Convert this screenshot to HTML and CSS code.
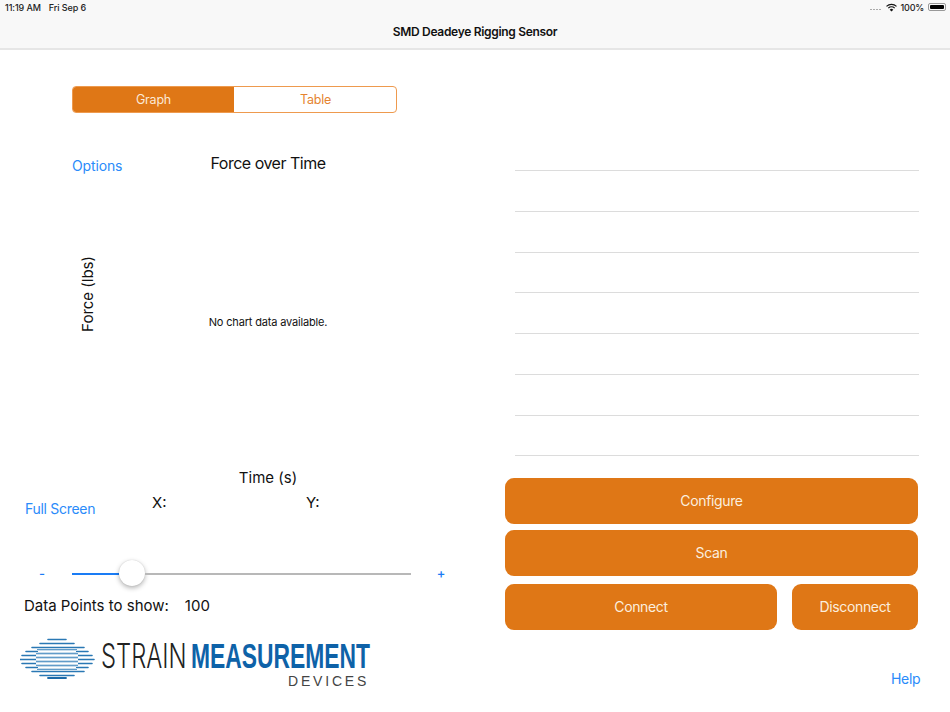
FILE: index.html
```html
<!DOCTYPE html>
<html lang="en">
<head>
<meta charset="utf-8">
<title>SMD Deadeye Rigging Sensor</title>
<link rel="stylesheet" href="styles.css">
</head>
<body>
<div class="app">
  <header class="topbar">
    <div class="status">
      <div class="status-left"><span>11:19 AM</span><span>Fri Sep 6</span></div>
      <div class="status-right">
        <span class="signal"><i></i><i></i><i></i><i></i></span>
        <svg class="wifi" width="11" height="9" viewBox="0 0 11 9"><path d="M5.500 8.600 3.700 6.700a2.600 2.600 0 0 1 3.600 0z" fill="#111"/><path d="M2.700 5.600a4 4 0 0 1 5.600 0l.8-.9a5.200 5.200 0 0 0-7.200 0z" fill="#111"/><path d="M.9 3.800a6.600 6.600 0 0 1 9.200 0l.8-.9a7.800 7.800 0 0 0-10.800 0z" fill="#111"/></svg>
        <span class="pct">100%</span>
        <span class="battery"><span class="battery-fill"></span></span>
      </div>
    </div>
    <h1 class="title">SMD Deadeye Rigging Sensor</h1>
  </header>
  <main class="content">
    <section class="left">
      <div class="segmented">
        <div class="seg seg-on">Graph</div>
        <div class="seg seg-off">Table</div>
      </div>
      <div class="chart">
        <div class="chart-head">
          <a class="link options">Options</a>
          <div class="chart-title">Force over Time</div>
        </div>
        <div class="chart-body">
          <div class="y-label">Force (lbs)</div>
          <div class="no-data">No chart data available.</div>
        </div>
        <div class="x-label">Time (s)</div>
      </div>
      <div class="readout">
        <a class="link full">Full Screen</a>
        <span class="read-x">X:</span>
        <span class="read-y">Y:</span>
      </div>
      <div class="slider-row">
        <span class="step">-</span>
        <div class="slider">
          <div class="track-on"></div>
          <div class="thumb"></div>
          <div class="track-off"></div>
        </div>
        <span class="step">+</span>
      </div>
      <div class="points"><span>Data Points to show:</span><span>100</span></div>
      <svg class="logo" width="352" height="54" viewBox="0 0 352 54">
        <g stroke="#2a78b4" stroke-linecap="round">
          <path stroke-width="1.600" d="M28 2.500H46M20 6.500H54M12 10.500H64M6 14.500H68M2 18.500H72M0 22.500H74M2 26.500H72M6 30.500H68M12 34.500H64M20 38.500H54"/>
        </g>
        <path stroke="#1d6aa8" stroke-width="1.800" stroke-linecap="round" d="M28 41H46"/>
        <g stroke="#fff" stroke-width="1"><path d="M18 14.500H56M16 18.500H58M16 22.500H58M16 26.500H58M18 30.500H56"/></g>
        <g stroke="#3a83bb" stroke-width=".8"><path d="M17 12.500H57M16 16.500H58M16 20.500H58M16 24.500H58M16 28.500H58M17 32.500H57"/></g>
        <text class="logo-strain" transform="translate(81 31) scale(.7 1)">STRAIN</text>
        <text class="logo-meas" transform="translate(171 31) scale(.653 1)">MEASUREMENT</text>
        <text class="logo-dev" x="268" y="49">DEVICES</text>
      </svg>
    </section>
    <section class="right">
      <div class="table">
        <div class="row"></div><div class="row"></div><div class="row"></div><div class="row"></div>
        <div class="row"></div><div class="row"></div><div class="row"></div><div class="row"></div>
      </div>
      <div class="actions">
        <button class="btn btn-wide">Configure</button>
        <button class="btn btn-wide">Scan</button>
        <div class="btn-pair">
          <button class="btn">Connect</button>
          <button class="btn">Disconnect</button>
        </div>
      </div>
      <a class="link help">Help</a>
    </section>
  </main>
</div>
</body>
</html>
```
FILE: styles.css
```css
* { box-sizing: border-box; }
html, body { margin: 0; padding: 0; background: #fff; }
body { font-family: Inter, "Liberation Sans", sans-serif; color: #111; }
.app { width: 950px; height: 712px; overflow: hidden; display: flex; flex-direction: column; }

.topbar { height: 50px; background: #f8f8f8; border-bottom: 2px solid #e6e6e6; display: flex; flex-direction: column; }
.status { height: 14px; padding: 0 4px 0 5px; display: flex; justify-content: space-between; align-items: center; font-size: 9px; font-weight: 500; color: #222; letter-spacing: -.1px; }
.status-left { display: flex; gap: 8px; }
.status-right { display: flex; align-items: center; gap: 4px; }
.signal { display: flex; gap: 1px; margin-right: 1px; padding-top: 4px; }
.signal i { width: 2px; height: 1px; background: #aaa; }
.wifi { display: block; }
.pct { letter-spacing: -.2px; }
.battery { width: 18px; height: 8px; border-radius: 2px; border: 1px solid #999; padding: 1px; display: block; }
.battery-fill { display: block; width: 100%; height: 100%; background: #000; border-radius: 1px; }
.title { margin: 6px 0 0; font-size: 12px; font-weight: 600; line-height: 24px; text-align: center; color: #111; letter-spacing: -.31px; }

.content { flex: 1; display: flex; }
.left { width: 490px; padding: 36px 0 0 20px; display: flex; flex-direction: column; align-items: flex-start; }
.right { width: 460px; padding-left: 15px; display: flex; flex-direction: column; }

.segmented { margin-left: 52px; width: 325px; height: 27px; display: flex; border: 1px solid #ee9a4e; border-radius: 4px; overflow: hidden; }
.seg { flex: 1; text-align: center; font-size: 12.5px; line-height: 26px; letter-spacing: -.2px; }
.seg-off { color: #e58431; padding-left: 1px; }
.seg-on { background: #df7716; color: #fbe9d6; }

.chart { margin: 40px 0 0 52px; width: 392px; }
.chart-head { display: grid; grid-template-columns: 1fr auto 1fr; align-items: start; }
.link { color: #2a8bfa; font-size: 14px; line-height: 20px; }
.options { margin-top: 3px; letter-spacing: -.15px; }
.chart-title { font-size: 16px; line-height: 20px; color: #111; letter-spacing: -.5px; }
.chart-body { height: 286px; display: grid; grid-template-columns: 1fr auto 1fr; margin-top: 3px; }
.y-label { writing-mode: vertical-rl; transform: rotate(180deg); justify-self: start; align-self: start; margin: 77px 0 0 8px; font-size: 15px; line-height: 16px; }
.no-data { align-self: center; font-size: 11px; line-height: 16px; color: #111; letter-spacing: -.17px; }
.x-label { margin-top: 3px; text-align: center; font-size: 15px; line-height: 20px; }

.readout { display: flex; align-items: flex-start; font-size: 15px; line-height: 20px; margin-top: 5px; }
.full { margin: 6px 0 0 5px; width: 127px; letter-spacing: -.3px; }
.read-x { width: 154px; }

.slider-row { margin-top: 40px; width: 444px; display: flex; align-items: center; height: 30px; }
.step { width: 52px; text-align: center; padding-right: 8px; margin-bottom: 3px; font-size: 13px; font-weight: 500; color: #1a7cf5; }
.step:last-child { padding: 0 0 0 8px; }
.slider { width: 339px; display: flex; align-items: center; }
.track-on { width: 47px; height: 2px; background: #1a7cf5; }
.track-off { flex: 1; height: 2px; background: #b8b8b8; }
.thumb { width: 26px; height: 26px; flex: none; margin-bottom: 2px; border-radius: 50%; background: #fff; box-shadow: 0 2px 5px rgba(0,0,0,.3), 0 0 1px rgba(0,0,0,.2); }

.points { margin: 7px 0 0 4px; display: flex; gap: 16px; font-size: 15px; line-height: 20px; color: #111; }
.logo { display: block; margin-top: 21px; }
.logo-strain { font-family: Inter, sans-serif; font-weight: 300; font-size: 34px; fill: #222; }
.logo-meas { font-family: "Liberation Sans", sans-serif; font-weight: 700; font-size: 35px; fill: #0e62a8; }
.logo-dev { font-family: "Liberation Sans", sans-serif; font-size: 14px; fill: #444; letter-spacing: 2.8px; }

.table { margin: 80.3px 0 0 10px; width: 403.500px; }
.row { height: 40.75px; border-bottom: 1px solid #dcdcdc; }
.actions { margin-top: 21.7px; width: 413px; display: flex; flex-direction: column; gap: 6px; }
.btn { height: 46px; border: 0; padding: 0; border-radius: 9px; background: #df7716; color: #fbeede; font-family: inherit; font-size: 14px; letter-spacing: -.35px; }
.btn-pair { margin-top: 2px; display: grid; grid-template-columns: 272px 126px; gap: 15px; }
.help { margin: 39px 0 0 386px; letter-spacing: -.3px; }
```
